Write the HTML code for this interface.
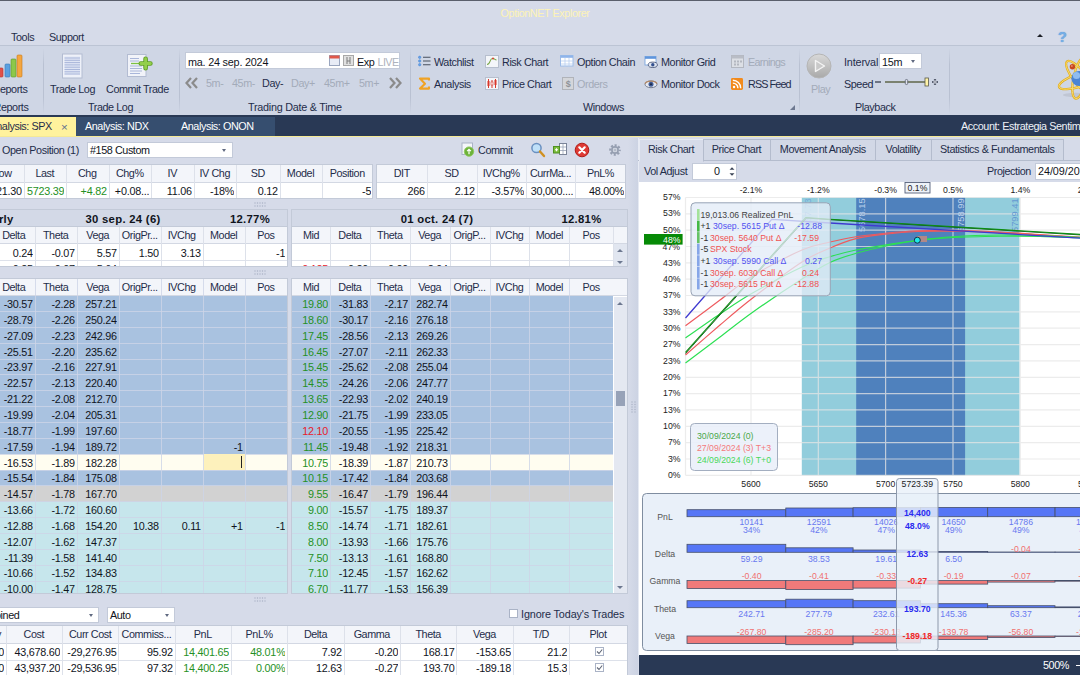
<!DOCTYPE html>
<html><head><meta charset="utf-8"><title>OptionNET Explorer</title>
<style>
*{box-sizing:border-box;margin:0;padding:0}
html,body{width:1080px;height:675px;overflow:hidden;background:#d6dbe9}
body{font-family:"Liberation Sans",sans-serif;font-size:10.8px;letter-spacing:-0.42px;color:#1f2d4a;position:relative}
.a{position:absolute;white-space:nowrap}
.t{position:absolute;white-space:nowrap;line-height:14px;height:14px}
.c{text-align:center}
.r{text-align:right;letter-spacing:-0.25px}
.g{color:#8a93a3}
.box{position:absolute;background:#fff;border:1px solid #b9c1d1}
.sep{position:absolute;width:1px;background:linear-gradient(#cfd6e5,#b9c1d2 25%,#b9c1d2 75%,#cfd6e5);top:48px;height:66px}
.grid{position:absolute;background:#fff;border:1px solid #c3cad8;overflow:hidden}
.hd{position:absolute;background:#f3f5fa;border-bottom:1px solid #d3d8e3;left:0;right:0}
.cell{position:absolute;line-height:14px;white-space:nowrap;overflow:hidden}
.vl{position:absolute;width:1px;background:#dde1ea}
.hl{position:absolute;height:1px;background:#dde1ea;left:0;right:0}
.gr{color:#249024}
.rd{color:#e8202a}
.tab{position:absolute;top:138.5px;height:22px;border:1px solid #b4bccd;background:#d2d8e6;text-align:center;line-height:19px}
.ch{font-family:"Liberation Sans",sans-serif;letter-spacing:0}
</style></head><body>

<div class="a" style="left:0;top:0;width:1080px;height:1px;background:#5a5f6c"></div>
<div class="a" style="left:0;top:2px;width:1080px;height:44px;background:#d6dbe9"></div>
<div class="t c" style="left:480px;width:130px;top:6px;color:#fdf3b6">OptionNET Explorer</div>
<div class="t" style="left:11px;top:30px">Tools</div>
<div class="t" style="left:49px;top:30px">Support</div>
<div class="a" style="left:1036.5px;top:33.5px;width:0;height:0;border-left:3.3px solid transparent;border-right:3.3px solid transparent;border-bottom:3.8px solid #1c1f26"></div>
<div class="a" style="left:1058px;top:27.5px;font-size:14.5px;font-weight:bold;color:#76aee6;letter-spacing:0;line-height:18px;text-shadow:0 0 1px #4a86c8">?</div>
<div class="a" style="left:0;top:45px;width:1080px;height:70px;background:#cfd6e5;border-top:1px solid #bcc4d4"></div>
<div class="sep" style="left:43px"></div>
<div class="sep" style="left:179px"></div>
<div class="sep" style="left:410px"></div>
<div class="sep" style="left:799px"></div>
<div class="sep" style="left:949px"></div>
<svg class="a" style="left:0;top:52px" width="26" height="28" viewBox="0 0 26 28">
<rect x="-2" y="16" width="5" height="9" rx="1" fill="#e0524a" stroke="#b8342c" stroke-width=".6"/>
<rect x="5" y="12" width="5" height="13" rx="1" fill="#5aa0e0" stroke="#3778b8" stroke-width=".6"/>
<rect x="11" y="7" width="5" height="18" rx="1" fill="#8cc84a" stroke="#5c9828" stroke-width=".6"/>
<rect x="17" y="3" width="5" height="22" rx="1" fill="#f4a640" stroke="#c87818" stroke-width=".6"/>
</svg>
<div class="t" style="left:-7.5px;top:82px">Reports</div>
<div class="t" style="left:-6.5px;top:100px">Reports</div>
<svg class="a" style="left:61px;top:52px" width="24" height="28" viewBox="0 0 24 28">
<rect x="1.5" y="2" width="19.5" height="24" fill="#eef1f9" stroke="#b3bcd2"/>
<rect x="3.5" y="4.5" width="15.5" height="18" fill="#dfe5f4"/>
<g stroke="#a9b6da" stroke-width="1"><path d="M3.5 6h15.5M3.5 8.3h15.5M3.5 10.6h15.5M3.5 12.9h15.5M3.5 15.2h15.5M3.5 17.5h15.5M3.5 19.8h15.5M3.5 22h15.5"/></g>
</svg>
<div class="t" style="left:50px;top:82px">Trade Log</div>
<svg class="a" style="left:126px;top:52px" width="28" height="28" viewBox="0 0 28 28">
<rect x="1.5" y="2.5" width="18.5" height="22" fill="#f1f3f9" stroke="#b3bcd2"/>
<g stroke="#a9b6da" stroke-width="1.1"><path d="M4 6.5h9M4 9h9M4 14h12M4 16.5h12M4 19h12M4 21.5h10"/></g>
<path d="M5 11.5h10" stroke="#7cc142" stroke-width="1.3"/>
<path d="M14.8 11.5h9.6M19.6 6.7v9.6" stroke="#5e9d24" stroke-width="4.6" stroke-linecap="round"/>
<path d="M14.8 11.5h9.6M19.6 6.7v9.6" stroke="#93cf4a" stroke-width="2.8" stroke-linecap="round"/>
</svg>
<div class="t" style="left:106px;top:82px">Commit Trade</div>
<div class="t" style="left:88px;top:100px">Trade Log</div>
<div class="box" style="left:185px;top:52px;width:215px;height:17px;border-color:#c3cad9"></div>
<div class="t" style="left:188px;top:54.5px;color:#10141c;letter-spacing:-0.2px">ma. 24 sep. 2024</div>
<svg class="a" style="left:329px;top:55px" width="26" height="12" viewBox="0 0 26 12">
<rect x=".5" y=".5" width="10" height="10" fill="#e8ecf6" stroke="#9aa6bf"/><rect x=".5" y=".5" width="10" height="3" fill="#e0584a"/>
<rect x="14.5" y=".5" width="10" height="10" fill="#e0e0e0" stroke="#a8a8a8"/><path d="M18 2v7M21 2v7M18 6h3" stroke="#7c7c7c" stroke-width="1"/>
</svg>
<div class="t" style="left:357px;top:54.5px;color:#10141c">Exp</div>
<div class="t" style="left:377.5px;top:54.5px;color:#aeb3bd;letter-spacing:-0.6px">LIVE</div>
<svg class="a" style="left:185px;top:77px" width="14" height="12" viewBox="0 0 14 12"><path d="M6 1L1.5 6L6 11M12 1L7.5 6L12 11" fill="none" stroke="#8b8b8b" stroke-width="2.2"/></svg>
<svg class="a" style="left:388px;top:77px" width="14" height="12" viewBox="0 0 14 12"><path d="M2 1L6.5 6L2 11M8 1L12.5 6L8 11" fill="none" stroke="#8b8b8b" stroke-width="2.2"/></svg>
<div class="t" style="left:206px;top:76px;color:#a3abb9">5m-</div>
<div class="t" style="left:232px;top:76px;color:#a3abb9">45m-</div>
<div class="t" style="left:262px;top:76px;">Day-</div>
<div class="t" style="left:291px;top:76px;color:#a3abb9">Day+</div>
<div class="t" style="left:324px;top:76px;color:#a3abb9">45m+</div>
<div class="t" style="left:359px;top:76px;color:#a3abb9">5m+</div>
<div class="t" style="left:248px;top:100px;letter-spacing:-0.25px">Trading Date &amp; Time</div>
<svg class="a" style="left:418px;top:55px" width="13" height="12" viewBox="0 0 13 12"><g stroke="#48505f" stroke-width="1.1"><path d="M5 2.3h7.5M5 6h7.5M5 9.7h7.5"/></g><g fill="#6aa5ea" stroke="#3f7fd0" stroke-width=".5"><circle cx="1.7" cy="2.3" r="1.2"/><circle cx="1.7" cy="6" r="1.2"/><circle cx="1.7" cy="9.7" r="1.2"/></g></svg>
<div class="t" style="left:434px;top:54.5px;">Watchlist</div>
<svg class="a" style="left:418px;top:77px" width="13" height="13" viewBox="0 0 13 13"><path d="M11 3.6V1.6H2L7 6.7L2 11.6H11V9.6" fill="none" stroke="#f0a224" stroke-width="2.1" stroke-linejoin="round"/></svg>
<div class="t" style="left:434px;top:76.5px;">Analysis</div>
<svg class="a" style="left:485px;top:55px" width="14" height="13" viewBox="0 0 14 13"><rect x=".5" y=".5" width="13" height="12" fill="#f4f6fa" stroke="#b7bfce"/><path d="M2 9.5C5.5 9.5 4.5 3.5 7.5 3.5S9.5 5 11.5 5" fill="none" stroke="#7aa648" stroke-width="1.1"/><circle cx="8" cy="3.6" r="1" fill="#d8402c"/></svg>
<div class="t" style="left:502px;top:54.5px;">Risk Chart</div>
<svg class="a" style="left:485px;top:77px" width="14" height="13" viewBox="0 0 14 13"><rect x=".5" y=".5" width="13" height="12" fill="#f4f6fa" stroke="#b7bfce"/><g stroke="#d8382c" stroke-width="1"><path d="M3.5 2v9M7 3v8M10.5 2v9"/></g><rect x="2.5" y="4" width="2" height="5" fill="#d8382c"/><rect x="6" y="5" width="2" height="3" fill="#fff" stroke="#d8382c" stroke-width=".6"/><rect x="9.5" y="3" width="2" height="5" fill="#d8382c"/></svg>
<div class="t" style="left:502px;top:76.5px;">Price Chart</div>
<svg class="a" style="left:560px;top:55px" width="14" height="12" viewBox="0 0 14 12"><rect x=".5" y=".5" width="12.5" height="10.5" fill="#fff" stroke="#9dbce8"/><rect x=".5" y=".5" width="12.5" height="2.3" fill="#8eb4ea"/><g stroke="#b9cff0" stroke-width=".8"><path d="M1 6h12M1 9h12M5 3v9M9 3v9"/></g></svg>
<div class="t" style="left:577px;top:54.5px;">Option Chain</div>
<svg class="a" style="left:562px;top:77px" width="12" height="13" viewBox="0 0 12 13"><rect x=".5" y=".5" width="11" height="12" fill="#d4d6da" stroke="#b0b3b9"/><text x="6" y="10" font-size="9" text-anchor="middle" fill="#8f9298" font-family="Liberation Sans" font-weight="bold">$</text></svg>
<div class="t" style="left:577px;top:76.5px;color:#a3abb9;">Orders</div>
<svg class="a" style="left:644px;top:55px" width="14" height="13" viewBox="0 0 14 13"><rect x="1" y="1.5" width="11" height="8.5" fill="#fff" stroke="#7ba6de" stroke-width=".9"/><rect x="1" y="1.5" width="11" height="2.3" fill="#5f95dc"/><ellipse cx="8.8" cy="9.8" rx="4.6" ry="2.7" fill="#dfe5f0" stroke="#4e5a7c" stroke-width=".9"/><circle cx="8.8" cy="9.8" r="1.7" fill="#33508e"/></svg>
<div class="t" style="left:661px;top:54.5px;">Monitor Grid</div>
<svg class="a" style="left:644px;top:78px" width="14" height="12" viewBox="0 0 14 12"><ellipse cx="7" cy="6.3" rx="6" ry="3.4" fill="#e6e9f0" stroke="#6b7386" stroke-width=".9"/><path d="M1 5.6C3 2.4 11 2.4 13 5.6" fill="none" stroke="#b48a68" stroke-width="1.3"/><circle cx="7" cy="6.3" r="2.5" fill="#3d5a96"/><circle cx="7" cy="6.3" r="1" fill="#1c2740"/></svg>
<div class="t" style="left:661px;top:76.5px;">Monitor Dock</div>
<svg class="a" style="left:731px;top:55px" width="13" height="13" viewBox="0 0 13 13"><rect x=".5" y=".5" width="12" height="12" fill="#dcdfe5" stroke="#b3b7c0"/><rect x=".5" y=".5" width="12" height="3" fill="#b9bdc6"/><g fill="#b3b7c0"><rect x="3" y="5.5" width="2" height="2"/><rect x="6" y="5.5" width="2" height="2"/><rect x="9" y="5.5" width="2" height="2"/><rect x="3" y="8.5" width="2" height="2"/><rect x="6" y="8.5" width="2" height="2"/></g></svg>
<div class="t" style="left:748px;top:54.5px;color:#a3abb9;letter-spacing:-0.7px;">Earnings</div>
<svg class="a" style="left:731.3px;top:77.5px" width="12" height="12" viewBox="0 0 13 13"><rect width="13" height="13" rx="1.5" fill="#f28a1c"/><circle cx="3.3" cy="9.7" r="1.3" fill="#fff"/><path d="M2 5.5A5.5 5.5 0 0 1 7.5 11M2 2.5A8.5 8.5 0 0 1 10.5 11" fill="none" stroke="#fff" stroke-width="1.5"/></svg>
<div class="t" style="left:748px;top:76.5px;letter-spacing:-0.9px;">RSS Feed</div>
<div class="t" style="left:583px;top:100px">Windows</div>
<svg class="a" style="left:789px;top:104px" width="7" height="7" viewBox="0 0 7 7"><path d="M6 1V6H1Z" fill="#6d7890"/></svg>
<svg class="a" style="left:806px;top:53px" width="26" height="26" viewBox="0 0 26 26">
<defs><linearGradient id="pg" x1="0" y1="0" x2="0" y2="1"><stop offset="0" stop-color="#d9d9d9"/><stop offset="1" stop-color="#a9a9a9"/></linearGradient></defs>
<circle cx="13" cy="13" r="12" fill="url(#pg)" stroke="#b5b5b5"/><path d="M9.5 7.5L18.5 13L9.5 18.5Z" fill="#c9c9c9" stroke="#f4f4f4" stroke-width="1.4" stroke-linejoin="round"/></svg>
<div class="t" style="left:811px;top:82px;color:#a3abb9">Play</div>
<div class="t" style="left:844px;top:54.5px;letter-spacing:-0.15px">Interval</div>
<div class="box" style="left:879px;top:53px;width:43px;height:16px;border-color:#c3cad9"></div>
<div class="t" style="left:882px;top:54.5px;color:#10141c;letter-spacing:-0.2px">15m</div>
<div class="a" style="left:911px;top:60px;width:0;height:0;border-left:2.6px solid transparent;border-right:2.6px solid transparent;border-top:3px solid #5f6980"></div>
<div class="t" style="left:844px;top:76.5px">Speed</div>
<svg class="a" style="left:874px;top:76px" width="66" height="12" viewBox="0 0 66 12">
<rect x="1" y="5" width="6" height="2" fill="#6d7484"/><rect x="11" y="5" width="42" height="2" fill="#7b8270"/>
<rect x="31.3" y="3.5" width="2.4" height="5" rx="1" fill="#dfe2ea" stroke="#5a6172" stroke-width=".8"/>
<rect x="51" y="2" width="3.5" height="8" fill="#fff3a8" stroke="#5a5a4a" stroke-width=".8"/>
<path d="M58 6h6M61 3v6" stroke="#5a6172" stroke-width="2.2"/><path d="M59 6h4M61 4v4" stroke="#e6e9f0" stroke-width=".8"/></svg>
<div class="t" style="left:855px;top:100px">Playback</div>
<svg class="a" style="left:1050px;top:50px" width="30" height="52" viewBox="1050 50 30 52">
<ellipse cx="1076" cy="95" rx="13" ry="2.2" fill="#b9bfcc" opacity=".7"/>
<g fill="none" stroke="#e3ad1c" stroke-width="2.3"><ellipse cx="1080" cy="78" rx="6.5" ry="21" transform="rotate(-38 1080 78)"/><ellipse cx="1080" cy="78" rx="6.5" ry="21" transform="rotate(12 1080 78)"/><ellipse cx="1080" cy="80" rx="22" ry="6.5" transform="rotate(-18 1080 80)"/></g>
<g fill="none" stroke="#f7dc74" stroke-width=".9"><ellipse cx="1080" cy="78" rx="6.5" ry="21" transform="rotate(-38 1080 78)"/><ellipse cx="1080" cy="78" rx="6.5" ry="21" transform="rotate(12 1080 78)"/><ellipse cx="1080" cy="80" rx="22" ry="6.5" transform="rotate(-18 1080 80)"/></g>
<circle cx="1079" cy="78.5" r="7.6" fill="#4a84d4"/><circle cx="1076.5" cy="75.5" r="3.6" fill="#8fbcf0"/><circle cx="1072.4" cy="66.7" r="2.7" fill="#c8461e"/><circle cx="1071.8" cy="66" r="1" fill="#e88a60"/></svg>
<div class="a" style="left:0;top:115px;width:1080px;height:22px;background:#293955"></div>
<div class="a" style="left:76px;top:117px;width:199px;height:19px;background:#364e6f"></div>
<div class="a" style="left:0;top:117px;width:76px;height:20px;background:#fff29d"></div>
<div class="a" style="left:0;top:135.5px;width:1080px;height:1.5px;background:#f5e995"></div>
<div class="t" style="left:-10.5px;top:119px;color:#1f2d4a">Analysis: SPX</div>
<div class="t" style="left:61px;top:119.5px;color:#5d6f8e;font-size:11.5px;letter-spacing:0">×</div>
<div class="t" style="left:85px;top:119px;color:#fff">Analysis: NDX</div>
<div class="t" style="left:181px;top:119px;color:#fff">Analysis: ONON</div>
<div class="t" style="left:961px;top:119px;color:#eef1f7">Account: Estrategia Sentimiento</div><div class="t" style="left:2px;top:143px">Open Position (1)</div>
<div class="box" style="left:87px;top:142px;width:146px;height:16px;border-color:#c3cad9"></div>
<div class="t" style="left:90px;top:143px;color:#10141c">#158 Custom</div>
<div class="a" style="left:222px;top:149px;width:0;height:0;border-left:2.6px solid transparent;border-right:2.6px solid transparent;border-top:3px solid #5f6980"></div>
<svg class="a" style="left:461px;top:142px" width="15" height="15" viewBox="0 0 15 15"><rect x="1" y="1" width="10.5" height="11.5" fill="#f4f6fa" stroke="#aab3c6"/><circle cx="8" cy="9.6" r="4.7" fill="#6db33a" stroke="#8fca60" stroke-width=".9"/><path d="M8 12.2v-4.8M6.1 9.2l1.9-1.9 1.9 1.9" fill="none" stroke="#fff" stroke-width="1.2"/></svg>
<div class="t" style="left:478px;top:143px">Commit</div>
<svg class="a" style="left:530px;top:142px" width="16" height="16" viewBox="0 0 16 16"><circle cx="6.5" cy="6" r="4.6" fill="#bfe0f8" stroke="#6a90c0" stroke-width="1.5"/><path d="M10 9.5l4 4.5" stroke="#d09020" stroke-width="2.4" stroke-linecap="round"/></svg>
<svg class="a" style="left:552px;top:142px" width="16" height="16" viewBox="0 0 16 16"><rect x="7.5" y="1.5" width="7" height="11" fill="#fff" stroke="#7b8498"/><path d="M8 5h6M8 8.5h6M11 2v10" stroke="#9aa3b6" stroke-width=".8"/><rect x="1.5" y="4.5" width="6" height="6.5" fill="#7cbc3c" stroke="#4f9022"/><path d="M3 7.75h3M4.5 6.2v3.1" stroke="#fff" stroke-width="1.1"/></svg>
<svg class="a" style="left:574px;top:142px" width="16" height="16" viewBox="0 0 16 16"><circle cx="8" cy="8" r="6.8" fill="#de3a34" stroke="#b01c18"/><path d="M5.3 5.3l5.4 5.4M10.7 5.3l-5.4 5.4" stroke="#fff" stroke-width="2.2" stroke-linecap="round"/></svg>
<svg class="a" style="left:608px;top:142.5px" width="14" height="14" viewBox="0 0 14 14"><circle cx="7" cy="7" r="4.8" fill="none" stroke="#959eb0" stroke-width="2" stroke-dasharray="2.1 1.67" stroke-dashoffset="1"/><circle cx="7" cy="7" r="3.1" fill="#e3e7f0" stroke="#959eb0" stroke-width="1.7"/><circle cx="7" cy="7" r="1.1" fill="none" stroke="#959eb0" stroke-width=".8"/></svg>
<div class="grid" style="left:-20px;top:164px;width:393px;height:35px">

<div class="hd" style="top:0px;height:17.6px"></div>
<div class="cell c" style="left:0px;width:42.5px;top:1.3px">Low</div>
<div class="cell c" style="left:42.5px;width:42.5px;top:1.3px">Last</div>
<div class="cell c" style="left:85px;width:42.5px;top:1.3px">Chg</div>
<div class="cell c" style="left:127.5px;width:42.5px;top:1.3px">Chg%</div>
<div class="cell c" style="left:170px;width:42.5px;top:1.3px">IV</div>
<div class="cell c" style="left:212.5px;width:42.5px;top:1.3px">IV Chg</div>
<div class="cell c" style="left:255px;width:43.5px;top:1.3px">SD</div>
<div class="cell c" style="left:298.5px;width:42.0px;top:1.3px">Model</div>
<div class="cell c" style="left:340.5px;width:51.5px;top:1.3px">Position</div>
<div class="cell r " style="left:0px;width:40.7px;top:18.9px;color:#10141c">5721.30</div>
<div class="cell r gr" style="left:42.5px;width:40.7px;top:18.9px">5723.39</div>
<div class="cell r gr" style="left:85px;width:40.7px;top:18.9px">+4.82</div>
<div class="cell r " style="left:127.5px;width:40.7px;top:18.9px;color:#10141c">+0.08...</div>
<div class="cell r " style="left:170px;width:40.7px;top:18.9px;color:#10141c">11.06</div>
<div class="cell r " style="left:212.5px;width:40.7px;top:18.9px;color:#10141c">-18%</div>
<div class="cell r " style="left:255px;width:41.7px;top:18.9px;color:#10141c">0.12</div>
<div class="cell r " style="left:340.5px;width:49.7px;top:18.9px;color:#10141c">-5</div>
<div class="vl" style="left:42.5px;top:0;height:34px"></div>
<div class="vl" style="left:85px;top:0;height:34px"></div>
<div class="vl" style="left:127.5px;top:0;height:34px"></div>
<div class="vl" style="left:170px;top:0;height:34px"></div>
<div class="vl" style="left:212.5px;top:0;height:34px"></div>
<div class="vl" style="left:255px;top:0;height:34px"></div>
<div class="vl" style="left:298.5px;top:0;height:34px"></div>
<div class="vl" style="left:340.5px;top:0;height:34px"></div>
</div>
<div class="grid" style="left:376px;top:164px;width:249.5px;height:35px">

<div class="hd" style="top:0px;height:17.6px"></div>
<div class="cell c" style="left:0px;width:49.5px;top:1.3px">DIT</div>
<div class="cell c" style="left:49.5px;width:50.0px;top:1.3px">SD</div>
<div class="cell c" style="left:99.5px;width:49.5px;top:1.3px">IVChg%</div>
<div class="cell c" style="left:149px;width:49px;top:1.3px">CurrMa...</div>
<div class="cell c" style="left:198px;width:51px;top:1.3px">PnL%</div>
<div class="cell r " style="left:0px;width:47.7px;top:18.9px;color:#10141c">266</div>
<div class="cell r " style="left:49.5px;width:48.2px;top:18.9px;color:#10141c">2.12</div>
<div class="cell r " style="left:99.5px;width:47.7px;top:18.9px;color:#10141c">-3.57%</div>
<div class="cell r " style="left:149px;width:47.2px;top:18.9px;color:#10141c">30,000....</div>
<div class="cell r " style="left:198px;width:49.2px;top:18.9px;color:#10141c">48.00%</div>
<div class="vl" style="left:49.5px;top:0;height:34px"></div>
<div class="vl" style="left:99.5px;top:0;height:34px"></div>
<div class="vl" style="left:149px;top:0;height:34px"></div>
<div class="vl" style="left:198px;top:0;height:34px"></div>
</div>
<svg class="a" style="left:254px;top:202px" width="12" height="5" viewBox="0 0 12 5"><g fill="#a9b1c4"><circle cy="1" cx="1" r=".7"/><circle cy="4" cx="1" r=".7"/><circle cy="1" cx="3.5" r=".7"/><circle cy="4" cx="3.5" r=".7"/><circle cy="1" cx="6" r=".7"/><circle cy="4" cx="6" r=".7"/><circle cy="1" cx="8.5" r=".7"/><circle cy="4" cx="8.5" r=".7"/><circle cy="1" cx="11" r=".7"/><circle cy="4" cx="11" r=".7"/></g></svg>
<svg class="a" style="left:254px;top:270px" width="12" height="5" viewBox="0 0 12 5"><g fill="#a9b1c4"><circle cy="1" cx="1" r=".7"/><circle cy="4" cx="1" r=".7"/><circle cy="1" cx="3.5" r=".7"/><circle cy="4" cx="3.5" r=".7"/><circle cy="1" cx="6" r=".7"/><circle cy="4" cx="6" r=".7"/><circle cy="1" cx="8.5" r=".7"/><circle cy="4" cx="8.5" r=".7"/><circle cy="1" cx="11" r=".7"/><circle cy="4" cx="11" r=".7"/></g></svg>
<svg class="a" style="left:254px;top:597px" width="12" height="5" viewBox="0 0 12 5"><g fill="#a9b1c4"><circle cy="1" cx="1" r=".7"/><circle cy="4" cx="1" r=".7"/><circle cy="1" cx="3.5" r=".7"/><circle cy="4" cx="3.5" r=".7"/><circle cy="1" cx="6" r=".7"/><circle cy="4" cx="6" r=".7"/><circle cy="1" cx="8.5" r=".7"/><circle cy="4" cx="8.5" r=".7"/><circle cy="1" cx="11" r=".7"/><circle cy="4" cx="11" r=".7"/></g></svg>
<div class="a" style="left:628px;top:138px;width:10px;height:537px;background:linear-gradient(90deg,#d6dbe9,#ccd3e3)"></div>
<svg class="a" style="left:631px;top:401px" width="5" height="12" viewBox="0 0 5 12"><g fill="#a9b1c4"><circle cx="1" cy="1" r=".7"/><circle cx="4" cy="1" r=".7"/><circle cx="1" cy="3.5" r=".7"/><circle cx="4" cy="3.5" r=".7"/><circle cx="1" cy="6" r=".7"/><circle cx="4" cy="6" r=".7"/><circle cx="1" cy="8.5" r=".7"/><circle cx="4" cy="8.5" r=".7"/><circle cx="1" cy="11" r=".7"/><circle cx="4" cy="11" r=".7"/></g></svg>
<div class="grid" style="left:-20px;top:209px;width:308px;height:58px;background:#fff">
<div class="a" style="left:0;top:0;width:308px;height:17.3px;background:#d3d9e7;border-bottom:1px solid #c3cad8"></div>
<div class="cell" style="left:-20.3px;top:1.5px;font-weight:bold;font-size:11.3px;letter-spacing:0.3px;color:#10141c">Quarterly</div>
<div class="cell c" style="left:82px;width:120px;top:1.5px;font-weight:bold;font-size:11.3px;letter-spacing:0.3px;color:#10141c">30 sep. 24 (6)</div>
<div class="cell r" style="left:200px;width:89px;top:1.5px;font-weight:bold;font-size:11.3px;letter-spacing:0.3px;color:#10141c">12.77%</div>
<div class="hd" style="top:17.3px;height:16.7px"></div>
<div class="cell c" style="left:0px;width:11.7px;top:18.3px"></div>
<div class="cell c" style="left:11.7px;width:42.0px;top:18.3px">Delta</div>
<div class="cell c" style="left:53.7px;width:42.0px;top:18.3px">Theta</div>
<div class="cell c" style="left:95.7px;width:41.999999999999986px;top:18.3px">Vega</div>
<div class="cell c" style="left:137.7px;width:42.0px;top:18.3px">OrigPr...</div>
<div class="cell c" style="left:179.7px;width:42.0px;top:18.3px">IVChg</div>
<div class="cell c" style="left:221.7px;width:42.0px;top:18.3px">Model</div>
<div class="cell c" style="left:263.7px;width:42.30000000000001px;top:18.3px">Pos</div>
<div class="cell r" style="left:11.7px;width:40.2px;top:36px;color:#10141c">0.24</div>
<div class="cell r" style="left:53.7px;width:40.2px;top:36px;color:#10141c">-0.07</div>
<div class="cell r" style="left:95.7px;width:40.19999999999999px;top:36px;color:#10141c">5.57</div>
<div class="cell r" style="left:137.7px;width:40.2px;top:36px;color:#10141c">1.50</div>
<div class="cell r" style="left:179.7px;width:40.2px;top:36px;color:#10141c">3.13</div>
<div class="cell r" style="left:263.7px;width:40.500000000000014px;top:36px;color:#10141c">-1</div>
<div class="cell r" style="left:11.7px;width:40.2px;top:52px;color:#10141c">0.25</div>
<div class="cell r" style="left:53.7px;width:40.2px;top:52px;color:#10141c">-0.07</div>
<div class="cell r" style="left:95.7px;width:40.19999999999999px;top:52px;color:#10141c">5.64</div>
<div class="hl" style="top:50px"></div>
<div class="vl" style="left:11.7px;top:17.3px;height:42px"></div>
<div class="vl" style="left:53.7px;top:17.3px;height:42px"></div>
<div class="vl" style="left:95.7px;top:17.3px;height:42px"></div>
<div class="vl" style="left:137.7px;top:17.3px;height:42px"></div>
<div class="vl" style="left:179.7px;top:17.3px;height:42px"></div>
<div class="vl" style="left:221.7px;top:17.3px;height:42px"></div>
<div class="vl" style="left:263.7px;top:17.3px;height:42px"></div>
</div>
<div class="grid" style="left:291px;top:209px;width:337px;height:58px;background:#fff">
<div class="a" style="left:0;top:0;width:337px;height:17.3px;background:#d3d9e7;border-bottom:1px solid #c3cad8"></div>
<div class="cell c" style="left:85px;width:120px;top:1.5px;font-weight:bold;font-size:11.3px;letter-spacing:0.3px;color:#10141c">01 oct. 24 (7)</div>
<div class="cell r" style="left:200px;width:109.5px;top:1.5px;font-weight:bold;font-size:11.3px;letter-spacing:0.3px;color:#10141c">12.81%</div>
<div class="hd" style="top:17.3px;height:16.7px"></div>
<div class="cell c" style="left:0px;width:37.9px;top:18.3px">Mid</div>
<div class="cell c" style="left:37.9px;width:39.9px;top:18.3px">Delta</div>
<div class="cell c" style="left:77.8px;width:39.900000000000006px;top:18.3px">Theta</div>
<div class="cell c" style="left:117.7px;width:39.89999999999999px;top:18.3px">Vega</div>
<div class="cell c" style="left:157.6px;width:39.900000000000006px;top:18.3px">OrigP...</div>
<div class="cell c" style="left:197.5px;width:39.900000000000006px;top:18.3px">IVChg</div>
<div class="cell c" style="left:237.4px;width:39.900000000000006px;top:18.3px">Model</div>
<div class="cell c" style="left:277.3px;width:43.69999999999999px;top:18.3px">Pos</div>
<div class="cell r rd" style="left:0px;width:36.1px;top:52px;">0.125</div>
<div class="cell r " style="left:37.9px;width:38.1px;top:52px;color:#10141c">0.20</div>
<div class="cell r " style="left:77.8px;width:38.10000000000001px;top:52px;color:#10141c">-0.09</div>
<div class="cell r " style="left:117.7px;width:38.099999999999994px;top:52px;color:#10141c">2.94</div>
<div class="hl" style="top:50px"></div>
<div class="vl" style="left:37.9px;top:17.3px;height:42px"></div>
<div class="vl" style="left:77.8px;top:17.3px;height:42px"></div>
<div class="vl" style="left:117.7px;top:17.3px;height:42px"></div>
<div class="vl" style="left:157.6px;top:17.3px;height:42px"></div>
<div class="vl" style="left:197.5px;top:17.3px;height:42px"></div>
<div class="vl" style="left:237.4px;top:17.3px;height:42px"></div>
<div class="vl" style="left:277.3px;top:17.3px;height:42px"></div>
<div class="vl" style="left:321px;top:17.3px;height:42px"></div>
<div class="a" style="left:322px;top:34px;width:15px;height:24px;background:#e1e6f0"></div>
<div class="a" style="left:325px;top:38.5px;width:0;height:0;border-left:3.5px solid transparent;border-right:3.5px solid transparent;border-bottom:3.5px solid #6d7890"></div>
<div class="a" style="left:325px;top:50.5px;width:0;height:0;border-left:3.5px solid transparent;border-right:3.5px solid transparent;border-top:3.5px solid #6d7890"></div>
</div>
<div class="grid" style="left:-20px;top:278px;width:308px;height:316px;background:#fff">
<div class="hd" style="top:0;height:16.7px"></div>
<div class="cell c" style="left:0px;width:11.7px;top:1px"></div>
<div class="cell c" style="left:11.7px;width:42.0px;top:1px">Delta</div>
<div class="cell c" style="left:53.7px;width:42.0px;top:1px">Theta</div>
<div class="cell c" style="left:95.7px;width:41.999999999999986px;top:1px">Vega</div>
<div class="cell c" style="left:137.7px;width:42.0px;top:1px">OrigPr...</div>
<div class="cell c" style="left:179.7px;width:42.0px;top:1px">IVChg</div>
<div class="cell c" style="left:221.7px;width:42.0px;top:1px">Model</div>
<div class="cell c" style="left:263.7px;width:42.30000000000001px;top:1px">Pos</div>
<div class="a" style="left:0;top:16.70px;width:306px;height:16.35px;background:#a9c2e0"></div>
<div class="a" style="left:0;top:32.55px;width:306px;height:16.35px;background:#a9c2e0"></div>
<div class="a" style="left:0;top:48.40px;width:306px;height:16.35px;background:#a9c2e0"></div>
<div class="a" style="left:0;top:64.25px;width:306px;height:16.35px;background:#a9c2e0"></div>
<div class="a" style="left:0;top:80.10px;width:306px;height:16.35px;background:#a9c2e0"></div>
<div class="a" style="left:0;top:95.95px;width:306px;height:16.35px;background:#a9c2e0"></div>
<div class="a" style="left:0;top:111.80px;width:306px;height:16.35px;background:#a9c2e0"></div>
<div class="a" style="left:0;top:127.65px;width:306px;height:16.35px;background:#a9c2e0"></div>
<div class="a" style="left:0;top:143.50px;width:306px;height:16.35px;background:#a9c2e0"></div>
<div class="a" style="left:0;top:159.35px;width:306px;height:16.35px;background:#a9c2e0"></div>
<div class="a" style="left:0;top:175.20px;width:306px;height:16.35px;background:#fffdf0"></div>
<div class="a" style="left:0;top:191.05px;width:306px;height:16.35px;background:#a9c2e0"></div>
<div class="a" style="left:0;top:206.90px;width:306px;height:16.35px;background:#d2d2d2"></div>
<div class="a" style="left:0;top:222.75px;width:306px;height:16.35px;background:#c6e6ec"></div>
<div class="a" style="left:0;top:238.60px;width:306px;height:16.35px;background:#c6e6ec"></div>
<div class="a" style="left:0;top:254.45px;width:306px;height:16.35px;background:#c6e6ec"></div>
<div class="a" style="left:0;top:270.30px;width:306px;height:16.35px;background:#c6e6ec"></div>
<div class="a" style="left:0;top:286.15px;width:306px;height:16.35px;background:#c6e6ec"></div>
<div class="a" style="left:0;top:302.00px;width:306px;height:16.35px;background:#c6e6ec"></div>
<div class="a" style="left:0;top:32px;width:306px;height:1px;background:rgba(205,213,231,.8)"></div>
<div class="a" style="left:0;top:48px;width:306px;height:1px;background:rgba(205,213,231,.8)"></div>
<div class="a" style="left:0;top:64px;width:306px;height:1px;background:rgba(205,213,231,.8)"></div>
<div class="a" style="left:0;top:80px;width:306px;height:1px;background:rgba(205,213,231,.8)"></div>
<div class="a" style="left:0;top:95px;width:306px;height:1px;background:rgba(205,213,231,.8)"></div>
<div class="a" style="left:0;top:111px;width:306px;height:1px;background:rgba(205,213,231,.8)"></div>
<div class="a" style="left:0;top:127px;width:306px;height:1px;background:rgba(205,213,231,.8)"></div>
<div class="a" style="left:0;top:143px;width:306px;height:1px;background:rgba(205,213,231,.8)"></div>
<div class="a" style="left:0;top:159px;width:306px;height:1px;background:rgba(205,213,231,.8)"></div>
<div class="a" style="left:0;top:175px;width:306px;height:1px;background:rgba(205,213,231,.8)"></div>
<div class="a" style="left:0;top:191px;width:306px;height:1px;background:rgba(205,213,231,.8)"></div>
<div class="a" style="left:0;top:206px;width:306px;height:1px;background:rgba(205,213,231,.8)"></div>
<div class="a" style="left:0;top:222px;width:306px;height:1px;background:rgba(205,213,231,.8)"></div>
<div class="a" style="left:0;top:238px;width:306px;height:1px;background:rgba(205,213,231,.8)"></div>
<div class="a" style="left:0;top:254px;width:306px;height:1px;background:rgba(205,213,231,.8)"></div>
<div class="a" style="left:0;top:270px;width:306px;height:1px;background:rgba(205,213,231,.8)"></div>
<div class="a" style="left:0;top:286px;width:306px;height:1px;background:rgba(205,213,231,.8)"></div>
<div class="a" style="left:0;top:302px;width:306px;height:1px;background:rgba(205,213,231,.8)"></div>
<div class="a" style="left:0;top:317px;width:306px;height:1px;background:rgba(205,213,231,.8)"></div>
<div class="cell r" style="left:11.7px;width:40.2px;top:18.00px;color:#10141c">-30.57</div>
<div class="cell r" style="left:53.7px;width:40.2px;top:18.00px;color:#10141c">-2.28</div>
<div class="cell r" style="left:95.7px;width:40.19999999999999px;top:18.00px;color:#10141c">257.21</div>
<div class="cell r" style="left:11.7px;width:40.2px;top:33.85px;color:#10141c">-28.79</div>
<div class="cell r" style="left:53.7px;width:40.2px;top:33.85px;color:#10141c">-2.26</div>
<div class="cell r" style="left:95.7px;width:40.19999999999999px;top:33.85px;color:#10141c">250.24</div>
<div class="cell r" style="left:11.7px;width:40.2px;top:49.70px;color:#10141c">-27.09</div>
<div class="cell r" style="left:53.7px;width:40.2px;top:49.70px;color:#10141c">-2.23</div>
<div class="cell r" style="left:95.7px;width:40.19999999999999px;top:49.70px;color:#10141c">242.96</div>
<div class="cell r" style="left:11.7px;width:40.2px;top:65.55px;color:#10141c">-25.51</div>
<div class="cell r" style="left:53.7px;width:40.2px;top:65.55px;color:#10141c">-2.20</div>
<div class="cell r" style="left:95.7px;width:40.19999999999999px;top:65.55px;color:#10141c">235.62</div>
<div class="cell r" style="left:11.7px;width:40.2px;top:81.40px;color:#10141c">-23.97</div>
<div class="cell r" style="left:53.7px;width:40.2px;top:81.40px;color:#10141c">-2.16</div>
<div class="cell r" style="left:95.7px;width:40.19999999999999px;top:81.40px;color:#10141c">227.91</div>
<div class="cell r" style="left:11.7px;width:40.2px;top:97.25px;color:#10141c">-22.57</div>
<div class="cell r" style="left:53.7px;width:40.2px;top:97.25px;color:#10141c">-2.13</div>
<div class="cell r" style="left:95.7px;width:40.19999999999999px;top:97.25px;color:#10141c">220.40</div>
<div class="cell r" style="left:11.7px;width:40.2px;top:113.10px;color:#10141c">-21.22</div>
<div class="cell r" style="left:53.7px;width:40.2px;top:113.10px;color:#10141c">-2.08</div>
<div class="cell r" style="left:95.7px;width:40.19999999999999px;top:113.10px;color:#10141c">212.70</div>
<div class="cell r" style="left:11.7px;width:40.2px;top:128.95px;color:#10141c">-19.99</div>
<div class="cell r" style="left:53.7px;width:40.2px;top:128.95px;color:#10141c">-2.04</div>
<div class="cell r" style="left:95.7px;width:40.19999999999999px;top:128.95px;color:#10141c">205.31</div>
<div class="cell r" style="left:11.7px;width:40.2px;top:144.80px;color:#10141c">-18.77</div>
<div class="cell r" style="left:53.7px;width:40.2px;top:144.80px;color:#10141c">-1.99</div>
<div class="cell r" style="left:95.7px;width:40.19999999999999px;top:144.80px;color:#10141c">197.60</div>
<div class="cell r" style="left:11.7px;width:40.2px;top:160.65px;color:#10141c">-17.59</div>
<div class="cell r" style="left:53.7px;width:40.2px;top:160.65px;color:#10141c">-1.94</div>
<div class="cell r" style="left:95.7px;width:40.19999999999999px;top:160.65px;color:#10141c">189.72</div>
<div class="cell r" style="left:221.7px;width:40.2px;top:160.65px;color:#10141c">-1</div>
<div class="cell r" style="left:11.7px;width:40.2px;top:176.50px;color:#10141c">-16.53</div>
<div class="cell r" style="left:53.7px;width:40.2px;top:176.50px;color:#10141c">-1.89</div>
<div class="cell r" style="left:95.7px;width:40.19999999999999px;top:176.50px;color:#10141c">182.28</div>
<div class="cell r" style="left:11.7px;width:40.2px;top:192.35px;color:#10141c">-15.54</div>
<div class="cell r" style="left:53.7px;width:40.2px;top:192.35px;color:#10141c">-1.84</div>
<div class="cell r" style="left:95.7px;width:40.19999999999999px;top:192.35px;color:#10141c">175.08</div>
<div class="cell r" style="left:11.7px;width:40.2px;top:208.20px;color:#10141c">-14.57</div>
<div class="cell r" style="left:53.7px;width:40.2px;top:208.20px;color:#10141c">-1.78</div>
<div class="cell r" style="left:95.7px;width:40.19999999999999px;top:208.20px;color:#10141c">167.70</div>
<div class="cell r" style="left:11.7px;width:40.2px;top:224.05px;color:#10141c">-13.66</div>
<div class="cell r" style="left:53.7px;width:40.2px;top:224.05px;color:#10141c">-1.72</div>
<div class="cell r" style="left:95.7px;width:40.19999999999999px;top:224.05px;color:#10141c">160.60</div>
<div class="cell r" style="left:11.7px;width:40.2px;top:239.90px;color:#10141c">-12.88</div>
<div class="cell r" style="left:53.7px;width:40.2px;top:239.90px;color:#10141c">-1.68</div>
<div class="cell r" style="left:95.7px;width:40.19999999999999px;top:239.90px;color:#10141c">154.20</div>
<div class="cell r" style="left:137.7px;width:40.2px;top:239.90px;color:#10141c">10.38</div>
<div class="cell r" style="left:179.7px;width:40.2px;top:239.90px;color:#10141c">0.11</div>
<div class="cell r" style="left:221.7px;width:40.2px;top:239.90px;color:#10141c">+1</div>
<div class="cell r" style="left:263.7px;width:40.500000000000014px;top:239.90px;color:#10141c">-1</div>
<div class="cell r" style="left:11.7px;width:40.2px;top:255.75px;color:#10141c">-12.07</div>
<div class="cell r" style="left:53.7px;width:40.2px;top:255.75px;color:#10141c">-1.62</div>
<div class="cell r" style="left:95.7px;width:40.19999999999999px;top:255.75px;color:#10141c">147.37</div>
<div class="cell r" style="left:11.7px;width:40.2px;top:271.60px;color:#10141c">-11.39</div>
<div class="cell r" style="left:53.7px;width:40.2px;top:271.60px;color:#10141c">-1.58</div>
<div class="cell r" style="left:95.7px;width:40.19999999999999px;top:271.60px;color:#10141c">141.40</div>
<div class="cell r" style="left:11.7px;width:40.2px;top:287.45px;color:#10141c">-10.66</div>
<div class="cell r" style="left:53.7px;width:40.2px;top:287.45px;color:#10141c">-1.52</div>
<div class="cell r" style="left:95.7px;width:40.19999999999999px;top:287.45px;color:#10141c">134.83</div>
<div class="cell r" style="left:11.7px;width:40.2px;top:303.30px;color:#10141c">-10.00</div>
<div class="cell r" style="left:53.7px;width:40.2px;top:303.30px;color:#10141c">-1.47</div>
<div class="cell r" style="left:95.7px;width:40.19999999999999px;top:303.30px;color:#10141c">128.75</div>
<div class="vl" style="left:11.7px;top:0;height:316px;background:rgba(205,213,231,.8)"></div>
<div class="vl" style="left:53.7px;top:0;height:316px;background:rgba(205,213,231,.8)"></div>
<div class="vl" style="left:95.7px;top:0;height:316px;background:rgba(205,213,231,.8)"></div>
<div class="vl" style="left:137.7px;top:0;height:316px;background:rgba(205,213,231,.8)"></div>
<div class="vl" style="left:179.7px;top:0;height:316px;background:rgba(205,213,231,.8)"></div>
<div class="vl" style="left:221.7px;top:0;height:316px;background:rgba(205,213,231,.8)"></div>
<div class="vl" style="left:263.7px;top:0;height:316px;background:rgba(205,213,231,.8)"></div>
<div class="a" style="left:222.7px;top:175.20px;width:41.0px;height:15.85px;background:#fdf1bc"></div>
<div class="a" style="left:259.7px;top:176.70px;width:1px;height:12px;background:#222"></div>
</div>
<div class="grid" style="left:291px;top:278px;width:337px;height:316px;background:#fff">
<div class="hd" style="top:0;height:16.7px"></div>
<div class="cell c" style="left:0px;width:37.9px;top:1px">Mid</div>
<div class="cell c" style="left:37.9px;width:39.9px;top:1px">Delta</div>
<div class="cell c" style="left:77.8px;width:39.900000000000006px;top:1px">Theta</div>
<div class="cell c" style="left:117.7px;width:39.89999999999999px;top:1px">Vega</div>
<div class="cell c" style="left:157.6px;width:39.900000000000006px;top:1px">OrigP...</div>
<div class="cell c" style="left:197.5px;width:39.900000000000006px;top:1px">IVChg</div>
<div class="cell c" style="left:237.4px;width:39.900000000000006px;top:1px">Model</div>
<div class="cell c" style="left:277.3px;width:43.69999999999999px;top:1px">Pos</div>
<div class="a" style="left:0;top:16.70px;width:321px;height:16.35px;background:#a9c2e0"></div>
<div class="a" style="left:0;top:32.55px;width:321px;height:16.35px;background:#a9c2e0"></div>
<div class="a" style="left:0;top:48.40px;width:321px;height:16.35px;background:#a9c2e0"></div>
<div class="a" style="left:0;top:64.25px;width:321px;height:16.35px;background:#a9c2e0"></div>
<div class="a" style="left:0;top:80.10px;width:321px;height:16.35px;background:#a9c2e0"></div>
<div class="a" style="left:0;top:95.95px;width:321px;height:16.35px;background:#a9c2e0"></div>
<div class="a" style="left:0;top:111.80px;width:321px;height:16.35px;background:#a9c2e0"></div>
<div class="a" style="left:0;top:127.65px;width:321px;height:16.35px;background:#a9c2e0"></div>
<div class="a" style="left:0;top:143.50px;width:321px;height:16.35px;background:#a9c2e0"></div>
<div class="a" style="left:0;top:159.35px;width:321px;height:16.35px;background:#a9c2e0"></div>
<div class="a" style="left:0;top:175.20px;width:321px;height:16.35px;background:#fffdf0"></div>
<div class="a" style="left:0;top:191.05px;width:321px;height:16.35px;background:#a9c2e0"></div>
<div class="a" style="left:0;top:206.90px;width:321px;height:16.35px;background:#d2d2d2"></div>
<div class="a" style="left:0;top:222.75px;width:321px;height:16.35px;background:#c6e6ec"></div>
<div class="a" style="left:0;top:238.60px;width:321px;height:16.35px;background:#c6e6ec"></div>
<div class="a" style="left:0;top:254.45px;width:321px;height:16.35px;background:#c6e6ec"></div>
<div class="a" style="left:0;top:270.30px;width:321px;height:16.35px;background:#c6e6ec"></div>
<div class="a" style="left:0;top:286.15px;width:321px;height:16.35px;background:#c6e6ec"></div>
<div class="a" style="left:0;top:302.00px;width:321px;height:16.35px;background:#c6e6ec"></div>
<div class="a" style="left:0;top:32px;width:321px;height:1px;background:rgba(205,213,231,.8)"></div>
<div class="a" style="left:0;top:48px;width:321px;height:1px;background:rgba(205,213,231,.8)"></div>
<div class="a" style="left:0;top:64px;width:321px;height:1px;background:rgba(205,213,231,.8)"></div>
<div class="a" style="left:0;top:80px;width:321px;height:1px;background:rgba(205,213,231,.8)"></div>
<div class="a" style="left:0;top:95px;width:321px;height:1px;background:rgba(205,213,231,.8)"></div>
<div class="a" style="left:0;top:111px;width:321px;height:1px;background:rgba(205,213,231,.8)"></div>
<div class="a" style="left:0;top:127px;width:321px;height:1px;background:rgba(205,213,231,.8)"></div>
<div class="a" style="left:0;top:143px;width:321px;height:1px;background:rgba(205,213,231,.8)"></div>
<div class="a" style="left:0;top:159px;width:321px;height:1px;background:rgba(205,213,231,.8)"></div>
<div class="a" style="left:0;top:175px;width:321px;height:1px;background:rgba(205,213,231,.8)"></div>
<div class="a" style="left:0;top:191px;width:321px;height:1px;background:rgba(205,213,231,.8)"></div>
<div class="a" style="left:0;top:206px;width:321px;height:1px;background:rgba(205,213,231,.8)"></div>
<div class="a" style="left:0;top:222px;width:321px;height:1px;background:rgba(205,213,231,.8)"></div>
<div class="a" style="left:0;top:238px;width:321px;height:1px;background:rgba(205,213,231,.8)"></div>
<div class="a" style="left:0;top:254px;width:321px;height:1px;background:rgba(205,213,231,.8)"></div>
<div class="a" style="left:0;top:270px;width:321px;height:1px;background:rgba(205,213,231,.8)"></div>
<div class="a" style="left:0;top:286px;width:321px;height:1px;background:rgba(205,213,231,.8)"></div>
<div class="a" style="left:0;top:302px;width:321px;height:1px;background:rgba(205,213,231,.8)"></div>
<div class="a" style="left:0;top:317px;width:321px;height:1px;background:rgba(205,213,231,.8)"></div>
<div class="cell r" style="left:0px;width:36.1px;top:18.00px;color:#249024">19.80</div>
<div class="cell r" style="left:37.9px;width:38.1px;top:18.00px;color:#10141c">-31.83</div>
<div class="cell r" style="left:77.8px;width:38.10000000000001px;top:18.00px;color:#10141c">-2.17</div>
<div class="cell r" style="left:117.7px;width:38.099999999999994px;top:18.00px;color:#10141c">282.74</div>
<div class="cell r" style="left:0px;width:36.1px;top:33.85px;color:#249024">18.60</div>
<div class="cell r" style="left:37.9px;width:38.1px;top:33.85px;color:#10141c">-30.17</div>
<div class="cell r" style="left:77.8px;width:38.10000000000001px;top:33.85px;color:#10141c">-2.16</div>
<div class="cell r" style="left:117.7px;width:38.099999999999994px;top:33.85px;color:#10141c">276.18</div>
<div class="cell r" style="left:0px;width:36.1px;top:49.70px;color:#249024">17.45</div>
<div class="cell r" style="left:37.9px;width:38.1px;top:49.70px;color:#10141c">-28.56</div>
<div class="cell r" style="left:77.8px;width:38.10000000000001px;top:49.70px;color:#10141c">-2.13</div>
<div class="cell r" style="left:117.7px;width:38.099999999999994px;top:49.70px;color:#10141c">269.26</div>
<div class="cell r" style="left:0px;width:36.1px;top:65.55px;color:#249024">16.45</div>
<div class="cell r" style="left:37.9px;width:38.1px;top:65.55px;color:#10141c">-27.07</div>
<div class="cell r" style="left:77.8px;width:38.10000000000001px;top:65.55px;color:#10141c">-2.11</div>
<div class="cell r" style="left:117.7px;width:38.099999999999994px;top:65.55px;color:#10141c">262.33</div>
<div class="cell r" style="left:0px;width:36.1px;top:81.40px;color:#249024">15.45</div>
<div class="cell r" style="left:37.9px;width:38.1px;top:81.40px;color:#10141c">-25.62</div>
<div class="cell r" style="left:77.8px;width:38.10000000000001px;top:81.40px;color:#10141c">-2.08</div>
<div class="cell r" style="left:117.7px;width:38.099999999999994px;top:81.40px;color:#10141c">255.04</div>
<div class="cell r" style="left:0px;width:36.1px;top:97.25px;color:#249024">14.55</div>
<div class="cell r" style="left:37.9px;width:38.1px;top:97.25px;color:#10141c">-24.26</div>
<div class="cell r" style="left:77.8px;width:38.10000000000001px;top:97.25px;color:#10141c">-2.06</div>
<div class="cell r" style="left:117.7px;width:38.099999999999994px;top:97.25px;color:#10141c">247.77</div>
<div class="cell r" style="left:0px;width:36.1px;top:113.10px;color:#249024">13.65</div>
<div class="cell r" style="left:37.9px;width:38.1px;top:113.10px;color:#10141c">-22.93</div>
<div class="cell r" style="left:77.8px;width:38.10000000000001px;top:113.10px;color:#10141c">-2.02</div>
<div class="cell r" style="left:117.7px;width:38.099999999999994px;top:113.10px;color:#10141c">240.19</div>
<div class="cell r" style="left:0px;width:36.1px;top:128.95px;color:#249024">12.90</div>
<div class="cell r" style="left:37.9px;width:38.1px;top:128.95px;color:#10141c">-21.75</div>
<div class="cell r" style="left:77.8px;width:38.10000000000001px;top:128.95px;color:#10141c">-1.99</div>
<div class="cell r" style="left:117.7px;width:38.099999999999994px;top:128.95px;color:#10141c">233.05</div>
<div class="cell r" style="left:0px;width:36.1px;top:144.80px;color:#e8202a">12.10</div>
<div class="cell r" style="left:37.9px;width:38.1px;top:144.80px;color:#10141c">-20.55</div>
<div class="cell r" style="left:77.8px;width:38.10000000000001px;top:144.80px;color:#10141c">-1.95</div>
<div class="cell r" style="left:117.7px;width:38.099999999999994px;top:144.80px;color:#10141c">225.42</div>
<div class="cell r" style="left:0px;width:36.1px;top:160.65px;color:#249024">11.45</div>
<div class="cell r" style="left:37.9px;width:38.1px;top:160.65px;color:#10141c">-19.48</div>
<div class="cell r" style="left:77.8px;width:38.10000000000001px;top:160.65px;color:#10141c">-1.92</div>
<div class="cell r" style="left:117.7px;width:38.099999999999994px;top:160.65px;color:#10141c">218.31</div>
<div class="cell r" style="left:0px;width:36.1px;top:176.50px;color:#249024">10.75</div>
<div class="cell r" style="left:37.9px;width:38.1px;top:176.50px;color:#10141c">-18.39</div>
<div class="cell r" style="left:77.8px;width:38.10000000000001px;top:176.50px;color:#10141c">-1.87</div>
<div class="cell r" style="left:117.7px;width:38.099999999999994px;top:176.50px;color:#10141c">210.73</div>
<div class="cell r" style="left:0px;width:36.1px;top:192.35px;color:#249024">10.15</div>
<div class="cell r" style="left:37.9px;width:38.1px;top:192.35px;color:#10141c">-17.42</div>
<div class="cell r" style="left:77.8px;width:38.10000000000001px;top:192.35px;color:#10141c">-1.84</div>
<div class="cell r" style="left:117.7px;width:38.099999999999994px;top:192.35px;color:#10141c">203.68</div>
<div class="cell r" style="left:0px;width:36.1px;top:208.20px;color:#249024">9.55</div>
<div class="cell r" style="left:37.9px;width:38.1px;top:208.20px;color:#10141c">-16.47</div>
<div class="cell r" style="left:77.8px;width:38.10000000000001px;top:208.20px;color:#10141c">-1.79</div>
<div class="cell r" style="left:117.7px;width:38.099999999999994px;top:208.20px;color:#10141c">196.44</div>
<div class="cell r" style="left:0px;width:36.1px;top:224.05px;color:#249024">9.00</div>
<div class="cell r" style="left:37.9px;width:38.1px;top:224.05px;color:#10141c">-15.57</div>
<div class="cell r" style="left:77.8px;width:38.10000000000001px;top:224.05px;color:#10141c">-1.75</div>
<div class="cell r" style="left:117.7px;width:38.099999999999994px;top:224.05px;color:#10141c">189.37</div>
<div class="cell r" style="left:0px;width:36.1px;top:239.90px;color:#249024">8.50</div>
<div class="cell r" style="left:37.9px;width:38.1px;top:239.90px;color:#10141c">-14.74</div>
<div class="cell r" style="left:77.8px;width:38.10000000000001px;top:239.90px;color:#10141c">-1.71</div>
<div class="cell r" style="left:117.7px;width:38.099999999999994px;top:239.90px;color:#10141c">182.61</div>
<div class="cell r" style="left:0px;width:36.1px;top:255.75px;color:#249024">8.00</div>
<div class="cell r" style="left:37.9px;width:38.1px;top:255.75px;color:#10141c">-13.93</div>
<div class="cell r" style="left:77.8px;width:38.10000000000001px;top:255.75px;color:#10141c">-1.66</div>
<div class="cell r" style="left:117.7px;width:38.099999999999994px;top:255.75px;color:#10141c">175.76</div>
<div class="cell r" style="left:0px;width:36.1px;top:271.60px;color:#249024">7.50</div>
<div class="cell r" style="left:37.9px;width:38.1px;top:271.60px;color:#10141c">-13.13</div>
<div class="cell r" style="left:77.8px;width:38.10000000000001px;top:271.60px;color:#10141c">-1.61</div>
<div class="cell r" style="left:117.7px;width:38.099999999999994px;top:271.60px;color:#10141c">168.80</div>
<div class="cell r" style="left:0px;width:36.1px;top:287.45px;color:#249024">7.10</div>
<div class="cell r" style="left:37.9px;width:38.1px;top:287.45px;color:#10141c">-12.45</div>
<div class="cell r" style="left:77.8px;width:38.10000000000001px;top:287.45px;color:#10141c">-1.57</div>
<div class="cell r" style="left:117.7px;width:38.099999999999994px;top:287.45px;color:#10141c">162.62</div>
<div class="cell r" style="left:0px;width:36.1px;top:303.30px;color:#249024">6.70</div>
<div class="cell r" style="left:37.9px;width:38.1px;top:303.30px;color:#10141c">-11.77</div>
<div class="cell r" style="left:77.8px;width:38.10000000000001px;top:303.30px;color:#10141c">-1.53</div>
<div class="cell r" style="left:117.7px;width:38.099999999999994px;top:303.30px;color:#10141c">156.39</div>
<div class="vl" style="left:37.9px;top:0;height:316px;background:rgba(205,213,231,.8)"></div>
<div class="vl" style="left:77.8px;top:0;height:316px;background:rgba(205,213,231,.8)"></div>
<div class="vl" style="left:117.7px;top:0;height:316px;background:rgba(205,213,231,.8)"></div>
<div class="vl" style="left:157.6px;top:0;height:316px;background:rgba(205,213,231,.8)"></div>
<div class="vl" style="left:197.5px;top:0;height:316px;background:rgba(205,213,231,.8)"></div>
<div class="vl" style="left:237.4px;top:0;height:316px;background:rgba(205,213,231,.8)"></div>
<div class="vl" style="left:277.3px;top:0;height:316px;background:rgba(205,213,231,.8)"></div>
<div class="a" style="left:322px;top:17.5px;width:15px;height:300px;background:#e4e8f1"></div>
<div class="a" style="left:325px;top:23px;width:0;height:0;border-left:3px solid transparent;border-right:3px solid transparent;border-bottom:3px solid #6d7890"></div>
<div class="a" style="left:325px;top:307px;width:0;height:0;border-left:3px solid transparent;border-right:3px solid transparent;border-top:3px solid #6d7890"></div>
<div class="a" style="left:324px;top:112px;width:9px;height:15px;background:#97a2b8"></div>
</div>
<div class="box" style="left:-20px;top:607px;width:119px;height:16px;border-color:#c3cad9"></div>
<div class="t" style="left:-26.5px;top:608px;color:#10141c">Combined</div>
<div class="a" style="left:89px;top:614px;width:0;height:0;border-left:2.6px solid transparent;border-right:2.6px solid transparent;border-top:3px solid #5f6980"></div>
<div class="box" style="left:107px;top:607px;width:68px;height:16px;border-color:#c3cad9"></div>
<div class="t" style="left:110px;top:608px;color:#10141c">Auto</div>
<div class="a" style="left:165px;top:614px;width:0;height:0;border-left:2.6px solid transparent;border-right:2.6px solid transparent;border-top:3px solid #5f6980"></div>
<div class="box" style="left:509px;top:609px;width:9px;height:9px;border-color:#aab3c6"></div>
<div class="t" style="left:521px;top:607px;letter-spacing:-0.12px">Ignore Today's Trades</div>
<div class="grid" style="left:-20px;top:624.5px;width:648px;height:60px">

<div class="hd" style="top:0px;height:18.3px"></div>
<div class="cell c" style="left:0px;width:24.7px;top:1.7px">Qty</div>
<div class="cell c" style="left:24.7px;width:56.3px;top:1.7px">Cost</div>
<div class="cell c" style="left:81px;width:56.30000000000001px;top:1.7px">Curr Cost</div>
<div class="cell c" style="left:137.3px;width:56.29999999999998px;top:1.7px">Commiss...</div>
<div class="cell c" style="left:193.6px;width:56.30000000000001px;top:1.7px">PnL</div>
<div class="cell c" style="left:249.9px;width:56.400000000000006px;top:1.7px">PnL%</div>
<div class="cell c" style="left:306.3px;width:56.30000000000001px;top:1.7px">Delta</div>
<div class="cell c" style="left:362.6px;width:56.39999999999998px;top:1.7px">Gamma</div>
<div class="cell c" style="left:419px;width:56.30000000000001px;top:1.7px">Theta</div>
<div class="cell c" style="left:475.3px;width:56.400000000000034px;top:1.7px">Vega</div>
<div class="cell c" style="left:531.7px;width:56.299999999999955px;top:1.7px">T/D</div>
<div class="cell c" style="left:588px;width:58px;top:1.7px">Plot</div>
<div class="cell r " style="left:0px;width:22.9px;top:19.8px;color:#10141c">10</div>
<div class="cell r " style="left:24.7px;width:54.5px;top:19.8px;color:#10141c">43,678.60</div>
<div class="cell r " style="left:81px;width:54.500000000000014px;top:19.8px;color:#10141c">-29,276.95</div>
<div class="cell r " style="left:137.3px;width:54.499999999999986px;top:19.8px;color:#10141c">95.92</div>
<div class="cell r gr" style="left:193.6px;width:54.500000000000014px;top:19.8px">14,401.65</div>
<div class="cell r gr" style="left:249.9px;width:54.60000000000001px;top:19.8px">48.01%</div>
<div class="cell r " style="left:306.3px;width:54.500000000000014px;top:19.8px;color:#10141c">7.92</div>
<div class="cell r " style="left:362.6px;width:54.59999999999998px;top:19.8px;color:#10141c">-0.20</div>
<div class="cell r " style="left:419px;width:54.500000000000014px;top:19.8px;color:#10141c">168.17</div>
<div class="cell r " style="left:475.3px;width:54.60000000000004px;top:19.8px;color:#10141c">-153.65</div>
<div class="cell r " style="left:531.7px;width:54.49999999999996px;top:19.8px;color:#10141c">21.2</div>
<div class="cell r " style="left:0px;width:22.9px;top:35.7px;color:#10141c">10</div>
<div class="cell r " style="left:24.7px;width:54.5px;top:35.7px;color:#10141c">43,937.20</div>
<div class="cell r " style="left:81px;width:54.500000000000014px;top:35.7px;color:#10141c">-29,536.95</div>
<div class="cell r " style="left:137.3px;width:54.499999999999986px;top:35.7px;color:#10141c">97.32</div>
<div class="cell r gr" style="left:193.6px;width:54.500000000000014px;top:35.7px">14,400.25</div>
<div class="cell r gr" style="left:249.9px;width:54.60000000000001px;top:35.7px">0.00%</div>
<div class="cell r " style="left:306.3px;width:54.500000000000014px;top:35.7px;color:#10141c">12.63</div>
<div class="cell r " style="left:362.6px;width:54.59999999999998px;top:35.7px;color:#10141c">-0.27</div>
<div class="cell r " style="left:419px;width:54.500000000000014px;top:35.7px;color:#10141c">193.70</div>
<div class="cell r " style="left:475.3px;width:54.60000000000004px;top:35.7px;color:#10141c">-189.18</div>
<div class="cell r " style="left:531.7px;width:54.49999999999996px;top:35.7px;color:#10141c">15.3</div>
<div class="vl" style="left:24.7px;top:0;height:60px"></div>
<div class="vl" style="left:81px;top:0;height:60px"></div>
<div class="vl" style="left:137.3px;top:0;height:60px"></div>
<div class="vl" style="left:193.6px;top:0;height:60px"></div>
<div class="vl" style="left:249.9px;top:0;height:60px"></div>
<div class="vl" style="left:306.3px;top:0;height:60px"></div>
<div class="vl" style="left:362.6px;top:0;height:60px"></div>
<div class="vl" style="left:419px;top:0;height:60px"></div>
<div class="vl" style="left:475.3px;top:0;height:60px"></div>
<div class="vl" style="left:531.7px;top:0;height:60px"></div>
<div class="vl" style="left:588px;top:0;height:60px"></div>
<div class="hl" style="top:34.2px"></div>
<svg class="a" style="left:614px;top:21.8px" width="9" height="9" viewBox="0 0 9 9"><rect x=".5" y=".5" width="8" height="8" fill="#fff" stroke="#aab3c6"/><path d="M2 4.5l2 2 3.2-4" fill="none" stroke="#5f6675" stroke-width="1.1"/></svg>
<svg class="a" style="left:614px;top:37.7px" width="9" height="9" viewBox="0 0 9 9"><rect x=".5" y=".5" width="8" height="8" fill="#fff" stroke="#aab3c6"/><path d="M2 4.5l2 2 3.2-4" fill="none" stroke="#5f6675" stroke-width="1.1"/></svg>
</div><div class="a" style="left:638px;top:138px;width:1px;height:518px;background:#e6eaf3"></div>
<div class="a" style="left:638px;top:159.5px;width:442px;height:1px;background:#b4bccd"></div>
<div class="tab" style="left:638.5px;width:65.0px;background:#d6dbe9;border-color:#e6eaf3 #b4bccd #d6dbe9 #e6eaf3;height:23px">Risk Chart</div>
<div class="tab" style="left:702.5px;width:68.0px">Price Chart</div>
<div class="tab" style="left:769.5px;width:106.5px">Movement Analysis</div>
<div class="tab" style="left:875px;width:56.5px">Volatility</div>
<div class="tab" style="left:930.5px;width:133.5px">Statistics &amp; Fundamentals</div>
<div class="t" style="left:644px;top:164px">Vol Adjust</div>
<div class="box" style="left:692px;top:163px;width:45px;height:16.5px;border-color:#c3cad9"></div>
<div class="t" style="left:714px;top:164px;color:#10141c">0</div>
<svg class="a" style="left:728px;top:165px" width="8" height="13" viewBox="0 0 8 13"><path d="M1.5 4.8L4 2.2L6.5 4.8ZM1.5 8.2L4 10.8L6.5 8.2Z" fill="#3c4557"/></svg>
<div class="t" style="left:987px;top:164px">Projection</div>
<div class="box" style="left:1035px;top:163px;width:60px;height:16.5px;border-color:#c3cad9"></div>
<div class="t" style="left:1038px;top:164px;color:#10141c;letter-spacing:-0.05px">24/09/2024</div>
<svg class="a ch" style="left:639px;top:181px" width="441" height="475" viewBox="639 181 441 475" font-family="Liberation Sans, sans-serif" font-size="8.7">
<rect x="639" y="182" width="441" height="474" fill="#fff"/>
<rect x="801.8" y="197.5" width="217.7" height="277.8" fill="#92cddc"/>
<rect x="856.2" y="197.5" width="108.9" height="277.8" fill="#4f81bd"/>
<path d="M685.5 197.5H1080M685.5 213.8H1080M685.5 230.2H1080M685.5 246.5H1080M685.5 262.9H1080M685.5 279.2H1080M685.5 295.5H1080M685.5 311.9H1080M685.5 328.2H1080M685.5 344.6H1080M685.5 360.9H1080M685.5 377.3H1080M685.5 393.6H1080M685.5 409.9H1080M685.5 426.3H1080M685.5 442.6H1080M685.5 459.0H1080M685.5 475.3H1080M751.0 197.5V475.3M818.3 197.5V475.3M885.6 197.5V475.3M953.0 197.5V475.3M1020.3 197.5V475.3M1087.6 197.5V475.3M685.5 197.5V475.3" stroke="#e6e6e6" stroke-opacity=".75" stroke-width="1.2" fill="none"/>
<text x="680.5" y="200.1" text-anchor="end" fill="#222">57%</text>
<text x="680.5" y="216.4" text-anchor="end" fill="#222">53%</text>
<text x="680.5" y="232.8" text-anchor="end" fill="#222">50%</text>
<text x="680" y="250.3" text-anchor="end" fill="#222">47%</text>
<text x="680.5" y="265.5" text-anchor="end" fill="#222">43%</text>
<text x="680.5" y="281.8" text-anchor="end" fill="#222">40%</text>
<text x="680.5" y="298.1" text-anchor="end" fill="#222">37%</text>
<text x="680.5" y="314.5" text-anchor="end" fill="#222">33%</text>
<text x="680.5" y="330.8" text-anchor="end" fill="#222">30%</text>
<text x="680.5" y="347.2" text-anchor="end" fill="#222">27%</text>
<text x="680.5" y="363.5" text-anchor="end" fill="#222">23%</text>
<text x="680.5" y="379.9" text-anchor="end" fill="#222">20%</text>
<text x="680.5" y="396.2" text-anchor="end" fill="#222">17%</text>
<text x="680.5" y="412.5" text-anchor="end" fill="#222">13%</text>
<text x="680.5" y="428.9" text-anchor="end" fill="#222">10%</text>
<text x="680.5" y="445.2" text-anchor="end" fill="#222">7%</text>
<text x="680.5" y="461.6" text-anchor="end" fill="#222">3%</text>
<text x="680.5" y="477.9" text-anchor="end" fill="#222">0%</text>
<rect x="644" y="234" width="38.6" height="10.6" fill="#068a06"/>
<text x="680.5" y="242.7" text-anchor="end" fill="#fff">48%</text>
<text x="751.0" y="192.8" text-anchor="middle" fill="#222">-2.1%</text>
<text x="818.3" y="192.8" text-anchor="middle" fill="#222">-1.2%</text>
<text x="885.6" y="192.8" text-anchor="middle" fill="#222">-0.3%</text>
<text x="953.0" y="192.8" text-anchor="middle" fill="#222">0.5%</text>
<text x="1020.3" y="192.8" text-anchor="middle" fill="#222">1.4%</text>
<text x="1087.6" y="192.8" text-anchor="middle" fill="#222">2.3%</text>
<rect x="905" y="182.5" width="25" height="10.5" fill="#eef2f8" stroke="#55607a" stroke-width=".9"/>
<text x="917.5" y="191" text-anchor="middle" fill="#222">0.1%</text>
<text x="751.0" y="486.8" text-anchor="middle" fill="#222">5600</text>
<text x="818.3" y="486.8" text-anchor="middle" fill="#222">5650</text>
<text x="885.6" y="486.8" text-anchor="middle" fill="#222">5700</text>
<text x="953.0" y="486.8" text-anchor="middle" fill="#222">5750</text>
<text x="1020.3" y="486.8" text-anchor="middle" fill="#222">5800</text>
<text x="1087.6" y="486.8" text-anchor="middle" fill="#222">5850</text>
<text transform="translate(810.8 232) rotate(-90)" font-size="9.3" fill="#74a8d8">5637.73</text>
<text transform="translate(865.2 232) rotate(-90)" font-size="9.3" fill="#b4cdea">5678.15</text>
<text transform="translate(963.6 232) rotate(-90)" font-size="9.3" fill="#bcd2ec">5758.99</text>
<text transform="translate(1018.0 232) rotate(-90)" font-size="9.3" fill="#6498d2">5799.41</text>
<g fill="none" stroke-width="1.15" stroke-linejoin="round">
<path d="M685.5 325.8C691.2 321.5 708.8 308.4 720 300C731.2 291.6 739.3 284.0 753 275.7C766.7 267.4 789.2 255.6 802 250C814.8 244.4 821.0 244.2 830 242C839.0 239.8 846.8 238.1 856 236.7C865.2 235.2 874.8 234.3 885 233.3C895.2 232.3 905.7 231.3 917 230.8C928.3 230.3 939.2 230.2 953 230.4C966.8 230.6 985.5 231.3 1000 232C1014.5 232.7 1026.7 233.7 1040 234.6C1053.3 235.5 1073.3 236.8 1080 237.2" stroke="#ee5a5e"/>
<path d="M685.5 355C691.2 350.0 708.8 334.6 720 325C731.2 315.4 739.3 308.2 753 297.7C766.7 287.2 789.2 270.3 802 262C814.8 253.7 821.0 251.9 830 248C839.0 244.1 846.8 240.9 856 238.6C865.2 236.3 874.8 235.4 885 234.2C895.2 233.0 905.7 232.0 917 231.5C928.3 231.0 939.2 231.0 953 231.2C966.8 231.4 985.5 232.0 1000 232.6C1014.5 233.2 1026.7 234.2 1040 235C1053.3 235.8 1073.3 237.1 1080 237.5" stroke="#ee5a5e"/>
<path d="M685.5 338C691.2 334.0 708.8 321.5 720 314C731.2 306.5 739.3 300.6 753 292.8C766.7 285.0 789.2 273.0 802 267C814.8 261.0 821.0 259.5 830 256.7C839.0 253.9 846.8 251.9 856 250C865.2 248.1 874.8 246.6 885 245C895.2 243.4 905.7 241.6 917 240.2C928.3 238.8 939.2 237.6 953 236.7C966.8 235.8 985.5 235.2 1000 235C1014.5 234.8 1026.7 235.2 1040 235.6C1053.3 236.0 1073.3 237.0 1080 237.3" stroke="#2be052"/>
<path d="M685.5 363C691.2 358.7 708.8 345.5 720 337C731.2 328.5 739.3 321.7 753 312C766.7 302.3 789.2 287.2 802 279C814.8 270.8 821.0 266.8 830 262.5C839.0 258.2 846.8 256.0 856 253.3C865.2 250.6 874.8 248.3 885 246.2C895.2 244.1 905.7 242.2 917 240.8C928.3 239.4 939.2 238.3 953 237.5C966.8 236.7 985.5 236.4 1000 236.2C1014.5 236.0 1026.7 236.1 1040 236.4C1053.3 236.7 1073.3 237.6 1080 237.8" stroke="#2be052"/>
<path d="M685.5 318L771.7 219.4L830 223L1080 238.2" stroke="#3f3ad0" stroke-width="1.3"/>
<path d="M685.5 353.5L806.5 218L830 219.7L1080 234.9" stroke="#0c4f12" stroke-width="0.9"/>
<path d="M685.5 352.3L805.7 217.5L830 219.2L1080 234.4" stroke="#0c8c12" stroke-width="1.1"/>
</g>
<rect x="917" y="236" width="10" height="6" fill="#b08888"/>
<circle cx="917.3" cy="240.2" r="3" fill="#1fe8e8" stroke="#17324a" stroke-width="1"/>
<rect x="691" y="202.8" width="139.3" height="93" rx="4" fill="#e3ecf7" fill-opacity=".78" stroke="#98a3b5"/>
<rect x="697" y="209.0" width="2.6" height="11" fill="#a4e29a"/>
<text x="700.5" y="217.7" fill="#444">19,013.06 Realized PnL</text>
<rect x="697" y="220.6" width="2.6" height="11" fill="#45b845"/>
<text x="700.5" y="229.3" fill="#333">+1</text>
<text x="713" y="229.3" fill="#5252f0">30sep. 5615 Put Δ</text>
<text x="822" y="229.3" text-anchor="end" fill="#5252f0">-12.88</text>
<rect x="697" y="232.1" width="2.6" height="11" fill="#66c266"/>
<text x="700.5" y="240.8" fill="#333">-1</text>
<text x="710" y="240.8" fill="#f05252">30sep. 5640 Put Δ</text>
<text x="819" y="240.8" text-anchor="end" fill="#f05252">-17.59</text>
<rect x="697" y="243.7" width="2.6" height="11" fill="#86a6e8"/>
<text x="700.5" y="252.4" fill="#333">-5</text>
<text x="710" y="252.4" fill="#f05252">SPX Stock</text>
<rect x="697" y="255.3" width="2.6" height="11" fill="#86a6e8"/>
<text x="700.5" y="264.0" fill="#333">+1</text>
<text x="713" y="264.0" fill="#5252f0">30sep. 5990 Call Δ</text>
<text x="822" y="264.0" text-anchor="end" fill="#5252f0">0.27</text>
<rect x="697" y="266.9" width="2.6" height="11" fill="#86a6e8"/>
<text x="700.5" y="275.6" fill="#333">-1</text>
<text x="710" y="275.6" fill="#f05252">30sep. 6030 Call Δ</text>
<text x="819" y="275.6" text-anchor="end" fill="#f05252">0.24</text>
<rect x="697" y="278.4" width="2.6" height="11" fill="#86a6e8"/>
<text x="700.5" y="287.1" fill="#333">-1</text>
<text x="710" y="287.1" fill="#f05252">30sep. 5615 Put Δ</text>
<text x="819" y="287.1" text-anchor="end" fill="#f05252">-12.88</text>
<rect x="690.5" y="423.5" width="87" height="47" rx="4" fill="#eaf0fa" fill-opacity=".9" stroke="#a3aec0"/>
<text x="697" y="439.0" fill="#4aa84a">30/09/2024 (0)</text>
<text x="697" y="450.8" fill="#f47a7a">27/09/2024 (3) T+3</text>
<text x="697" y="462.6" fill="#4ad85a">24/09/2024 (6) T+0</text>
<rect x="642.5" y="493.5" width="450" height="157" rx="4" fill="#e9f0f9" stroke="#7f8da0"/>
<text x="665" y="520" text-anchor="middle" fill="#555">PnL</text>
<text x="665" y="556.5" text-anchor="middle" fill="#555">Delta</text>
<text x="665" y="584" text-anchor="middle" fill="#555">Gamma</text>
<text x="665" y="611.5" text-anchor="middle" fill="#555">Theta</text>
<text x="665" y="639" text-anchor="middle" fill="#555">Vega</text>
<rect x="687.0" y="509.7" width="98.8" height="7.0" fill="#5676f6" stroke="#46506a" stroke-width=".8"/>
<rect x="785.8" y="508.0" width="67.3" height="8.7" fill="#5676f6" stroke="#46506a" stroke-width=".8"/>
<rect x="853.1" y="507.7" width="67.3" height="9.0" fill="#5676f6" stroke="#46506a" stroke-width=".8"/>
<rect x="920.4" y="507.4" width="67.3" height="9.3" fill="#5676f6" stroke="#46506a" stroke-width=".8"/>
<rect x="987.7" y="507.4" width="67.3" height="9.3" fill="#5676f6" stroke="#46506a" stroke-width=".8"/>
<rect x="1055.1" y="507.4" width="29.9" height="9.3" fill="#5676f6" stroke="#46506a" stroke-width=".8"/>
<text x="751.6" y="524.5" text-anchor="middle" fill="#6878f0">10141</text>
<text x="818.9" y="524.5" text-anchor="middle" fill="#6878f0">12591</text>
<text x="886.2" y="524.5" text-anchor="middle" fill="#6878f0">14026</text>
<text x="953.6" y="524.5" text-anchor="middle" fill="#6878f0">14650</text>
<text x="1020.9" y="524.5" text-anchor="middle" fill="#6878f0">14786</text>
<text x="1088.2" y="524.5" text-anchor="middle" fill="#6878f0">14798</text>
<text x="751.6" y="533" text-anchor="middle" fill="#6878f0">34%</text>
<text x="818.9" y="533" text-anchor="middle" fill="#6878f0">42%</text>
<text x="886.2" y="533" text-anchor="middle" fill="#6878f0">47%</text>
<text x="953.6" y="533" text-anchor="middle" fill="#6878f0">49%</text>
<text x="1020.9" y="533" text-anchor="middle" fill="#6878f0">49%</text>
<text x="1088.2" y="533" text-anchor="middle" fill="#6878f0">49%</text>
<rect x="687.0" y="544.3" width="98.8" height="8.0" fill="#5676f6" stroke="#46506a" stroke-width=".8"/>
<rect x="785.8" y="547.8" width="67.3" height="4.5" fill="#5676f6" stroke="#46506a" stroke-width=".8"/>
<rect x="853.1" y="550.0" width="67.3" height="2.3" fill="#5676f6" stroke="#46506a" stroke-width=".8"/>
<rect x="920.4" y="551.5" width="67.3" height="0.8" fill="#5676f6" stroke="#46506a" stroke-width=".8"/>
<rect x="987.7" y="552.0" width="67.3" height="0.3" fill="#5676f6" stroke="#46506a" stroke-width=".8"/>
<rect x="1055.1" y="552.0" width="29.9" height="0.3" fill="#5676f6" stroke="#46506a" stroke-width=".8"/>
<text x="751.6" y="561.7" text-anchor="middle" fill="#6878f0">59.29</text>
<text x="818.9" y="561.7" text-anchor="middle" fill="#6878f0">38.53</text>
<text x="886.2" y="561.7" text-anchor="middle" fill="#6878f0">19.61</text>
<text x="953.6" y="561.7" text-anchor="middle" fill="#6878f0">6.50</text>
<text x="1020.9" y="551.5" text-anchor="middle" fill="#f07070">-0.04</text>
<text x="1088.2" y="551.5" text-anchor="middle" fill="#f07070">-0.05</text>
<rect x="687.0" y="580.6" width="98.8" height="8.0" fill="#f07a7a" stroke="#46506a" stroke-width=".8"/>
<rect x="785.8" y="580.6" width="67.3" height="9.0" fill="#f07a7a" stroke="#46506a" stroke-width=".8"/>
<rect x="853.1" y="580.6" width="67.3" height="7.5" fill="#f07a7a" stroke="#46506a" stroke-width=".8"/>
<rect x="920.4" y="580.6" width="67.3" height="3.5" fill="#f07a7a" stroke="#46506a" stroke-width=".8"/>
<rect x="987.7" y="580.6" width="67.3" height="1.5" fill="#f07a7a" stroke="#46506a" stroke-width=".8"/>
<rect x="1055.1" y="580.6" width="29.9" height="0.6" fill="#f07a7a" stroke="#46506a" stroke-width=".8"/>
<text x="751.6" y="579" text-anchor="middle" fill="#f07070">-0.40</text>
<text x="818.9" y="579" text-anchor="middle" fill="#f07070">-0.41</text>
<text x="886.2" y="579" text-anchor="middle" fill="#f07070">-0.33</text>
<text x="953.6" y="579" text-anchor="middle" fill="#f07070">-0.19</text>
<text x="1020.9" y="579" text-anchor="middle" fill="#f07070">-0.07</text>
<text x="1088.2" y="579" text-anchor="middle" fill="#f07070">-0.02</text>
<rect x="687.0" y="600.7" width="98.8" height="7.0" fill="#5676f6" stroke="#46506a" stroke-width=".8"/>
<rect x="785.8" y="599.2" width="67.3" height="8.5" fill="#5676f6" stroke="#46506a" stroke-width=".8"/>
<rect x="853.1" y="600.7" width="67.3" height="7.0" fill="#5676f6" stroke="#46506a" stroke-width=".8"/>
<rect x="920.4" y="603.7" width="67.3" height="4.0" fill="#5676f6" stroke="#46506a" stroke-width=".8"/>
<rect x="987.7" y="605.7" width="67.3" height="2.0" fill="#5676f6" stroke="#46506a" stroke-width=".8"/>
<rect x="1055.1" y="606.9" width="29.9" height="0.8" fill="#5676f6" stroke="#46506a" stroke-width=".8"/>
<text x="751.6" y="616.7" text-anchor="middle" fill="#6878f0">242.71</text>
<text x="818.9" y="616.7" text-anchor="middle" fill="#6878f0">277.79</text>
<text x="886.2" y="616.7" text-anchor="middle" fill="#6878f0">232.61</text>
<text x="953.6" y="616.7" text-anchor="middle" fill="#6878f0">145.36</text>
<text x="1020.9" y="616.7" text-anchor="middle" fill="#6878f0">63.37</text>
<text x="1088.2" y="616.7" text-anchor="middle" fill="#6878f0">20.11</text>
<rect x="687.0" y="636.0" width="98.8" height="7.5" fill="#f07a7a" stroke="#46506a" stroke-width=".8"/>
<rect x="785.8" y="636.0" width="67.3" height="8.7" fill="#f07a7a" stroke="#46506a" stroke-width=".8"/>
<rect x="853.1" y="636.0" width="67.3" height="7.0" fill="#f07a7a" stroke="#46506a" stroke-width=".8"/>
<rect x="920.4" y="636.0" width="67.3" height="3.5" fill="#f07a7a" stroke="#46506a" stroke-width=".8"/>
<rect x="987.7" y="636.0" width="67.3" height="1.5" fill="#f07a7a" stroke="#46506a" stroke-width=".8"/>
<rect x="1055.1" y="636.0" width="29.9" height="0.6" fill="#f07a7a" stroke="#46506a" stroke-width=".8"/>
<text x="751.6" y="634.7" text-anchor="middle" fill="#f07070">-267.80</text>
<text x="818.9" y="634.7" text-anchor="middle" fill="#f07070">-285.20</text>
<text x="886.2" y="634.7" text-anchor="middle" fill="#f07070">-230.13</text>
<text x="953.6" y="634.7" text-anchor="middle" fill="#f07070">-139.78</text>
<text x="1020.9" y="634.7" text-anchor="middle" fill="#f07070">-56.80</text>
<text x="1088.2" y="634.7" text-anchor="middle" fill="#f07070">-18.30</text>
<rect x="896.5" y="478.5" width="41.5" height="172" rx="3" fill="#e9f0f9" fill-opacity=".82" stroke="#8e99ab"/>
<text x="917.3" y="486.8" text-anchor="middle" fill="#222">5723.39</text>
<text x="917.3" y="516" text-anchor="middle" font-weight="bold" fill="#2a2af0">14,400</text>
<text x="917.3" y="529" text-anchor="middle" font-weight="bold" fill="#2a2af0">48.0%</text>
<text x="917.3" y="556.7" text-anchor="middle" font-weight="bold" fill="#2a2af0">12.63</text>
<text x="917.3" y="584" text-anchor="middle" font-weight="bold" fill="#f02828">-0.27</text>
<text x="917.3" y="611.7" text-anchor="middle" font-weight="bold" fill="#2a2af0">193.70</text>
<text x="917.3" y="639" text-anchor="middle" font-weight="bold" fill="#f02828">-189.18</text>
</svg>
<div class="a" style="left:639px;top:655px;width:441px;height:20px;background:#293955"></div>
<div class="t" style="left:1043px;top:658px;color:#fff">500%</div>
<div class="a" style="left:1076px;top:665px;width:6px;height:1px;background:#fff"></div>
</body></html>
